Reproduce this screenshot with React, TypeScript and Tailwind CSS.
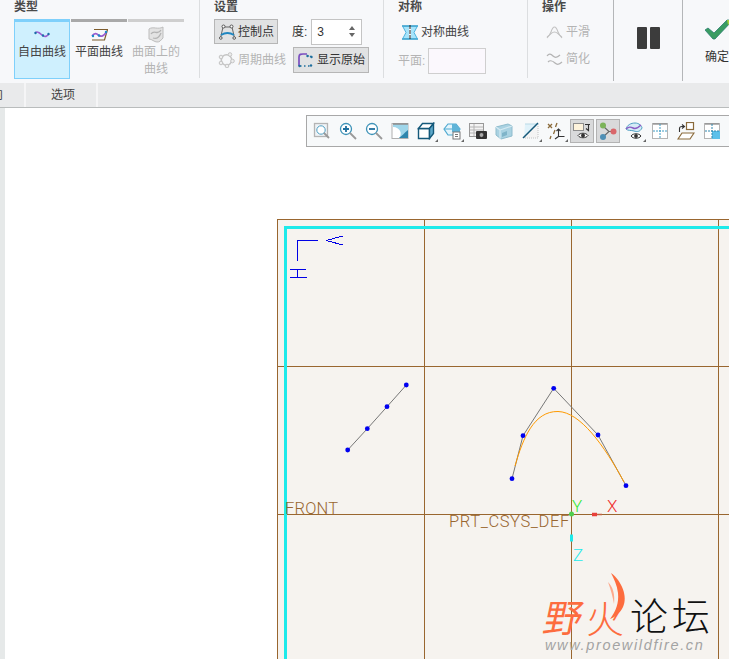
import React from "react";

const cjk = "font-['Liberation_Sans','Noto_Sans_CJK_SC',sans-serif]";

function Sep({ dark }: { dark?: boolean }) {
  return <div className={dark ? "w-px h-[81px] bg-[#b4b6b8] shrink-0" : "w-px h-[78px] bg-[#dcdee0] shrink-0"} />;
}

function Heading({ children }: { children: React.ReactNode }) {
  return <div className="text-xs font-bold text-[#4a4a4a] leading-[14px] h-[14px]">{children}</div>;
}

function TypeButton({ icon, label, state }: { icon: React.ReactNode; label: string; state: "on" | "off" | "dis" }) {
  const bar = state === "on" ? "bg-[#7fd0fb]" : state === "off" ? "bg-[#a9a9a9]" : "bg-[#cfcfcf]";
  const body = state === "on" ? "bg-[#cff0fe] border border-t-0 border-[#7fd0fb] text-[#444]" : state === "off" ? "text-[#444]" : "text-[#b4b4b4]";
  return (
    <div className="w-[56px] flex flex-col">
      <div className={`h-[3px] ${bar}`} />
      <div className={`h-[57px] flex flex-col items-center pt-[4px] ${body}`}>
        <div className="h-[16px] flex items-center justify-center">{icon}</div>
        <div className="text-xs leading-[17px] mt-[2px] text-center w-[50px]">{label}</div>
      </div>
    </div>
  );
}

const FreeIcon = (
  <svg width="16" height="8" viewBox="0 0 16 8" fill="none">
    <path d="M1 3C3 1 5 2 8 5s5 1 7-1" stroke="#9a5cd0" strokeWidth="1.600" />
    <circle cx="1.500" cy="3" r="1.200" fill="#1a6fa8" /><circle cx="9" cy="5.500" r="1.200" fill="#1a6fa8" /><circle cx="14.500" cy="4" r="1.200" fill="#1a6fa8" />
  </svg>
);
const PlaneIcon = (
  <svg width="17" height="13" viewBox="0 0 17 13" fill="none">
    <path d="M3 1.500h13.500l-3 10.500H1" stroke="#7d5c2e" strokeWidth="1.200" />
    <path d="M1 8C4 4 6 6 8 7.500s5 .5 7.500-3.500" stroke="#9a5cd0" strokeWidth="1.800" />
    <circle cx="2" cy="8" r="1.200" fill="#1a8ac8" /><circle cx="8" cy="7.500" r="1.200" fill="#1a8ac8" /><circle cx="15" cy="4" r="1.200" fill="#1a8ac8" />
  </svg>
);
const SurfIcon = (
  <svg width="16" height="17" viewBox="0 0 16 17" fill="none">
    <path d="M1 3C5 0 10 4 15 1v11c-3 3-3 4-6 4-3 0-5-3-8-3z" fill="#e3e3e3" stroke="#bdbdbd" />
    <path d="M3 8c3-5 7 2 10-4M5 12c3 1 6 0 8-5" stroke="#b4b4b4" strokeWidth="1.300" />
  </svg>
);
const CtrlIcon = (
  <svg width="17" height="16" viewBox="0 0 17 16" fill="none">
    <path d="M1.500 14L4 3h9l2.500 11" stroke="#666" />
    <path d="M2 11c4-2.500 9-2.500 13 0" stroke="#1f86c0" strokeWidth="1.800" />
    <circle cx="4.500" cy="2.500" r="1.500" fill="#fff" stroke="#555" /><circle cx="12.500" cy="2.500" r="1.500" fill="#fff" stroke="#555" />
    <circle cx="1.800" cy="14" r="1.300" fill="#fff" stroke="#555" /><circle cx="15.200" cy="14" r="1.300" fill="#fff" stroke="#555" />
  </svg>
);
const PeriodIcon = (
  <svg width="17" height="16" viewBox="0 0 17 16" fill="none" stroke="#c4c4c4">
    <circle cx="8.500" cy="8" r="5.200" strokeWidth="1.500" />
    <circle cx="3" cy="5" r="1.800" fill="#eee" /><circle cx="12" cy="2.500" r="1.800" fill="#eee" />
    <circle cx="14.500" cy="9" r="1.800" fill="#eee" /><circle cx="9" cy="14" r="1.800" fill="#eee" /><circle cx="3" cy="11" r="1.800" fill="#eee" />
  </svg>
);
const OrigIcon = (
  <svg width="16" height="15" viewBox="0 0 16 15" fill="none">
    <path d="M2 13V4C2 1 4 1 6 1h4" stroke="#7b4fc0" strokeWidth="1.700" />
    <path d="M10 2.500c2 1 3 1 4.500 1" stroke="#1f6f9e" strokeDasharray="1.500 1.500" strokeWidth="1.300" />
    <path d="M3 13h11" stroke="#1f6f9e" strokeDasharray="1.500 2.500" strokeWidth="1.700" />
    <circle cx="10.500" cy="3" r="1.200" fill="#1f6f9e" /><circle cx="14.500" cy="4" r="1.200" fill="#1f6f9e" /><circle cx="14" cy="12.500" r="1.200" fill="#1f6f9e" /><circle cx="2.500" cy="13" r="1.200" fill="#1f6f9e" />
  </svg>
);
const MirrorIcon = (
  <svg width="16" height="15" viewBox="0 0 16 15" fill="none">
    <path d="M0.500 1H7v13H0.500L4 7.500z" fill="#a6e4fb" />
    <path d="M15.500 1H9v13h6.500L12 7.500z" fill="#a6e4fb" />
    <path d="M0 1h16M0 14h16" stroke="#2f9ccc" strokeWidth="1.300" />
    <path d="M0.500 1L4 7.500 0.500 14M15.500 1L12 7.500l3.500 6.500" stroke="#4fb3de" />
    <path d="M8 0v15" stroke="#222" strokeDasharray="4 1" />
  </svg>
);
const SmoothIcon = (
  <svg width="17" height="13" viewBox="0 0 17 13" fill="none" stroke="#c2c2c2" strokeWidth="1.100">
    <path d="M1 11c2-1 3-2 4-5s2-5 3.500-5S11 3 12 6s2 4 4 5" />
    <path d="M1 12c3-4 5-6 7.500-6S13 8 16 12" />
  </svg>
);
const SimpleIcon = (
  <svg width="17" height="13" viewBox="0 0 17 13" fill="none" stroke="#b4b4b4" strokeWidth="1.200">
    <path d="M1 3c2-3 4-2 6 0s4 2 7-1" />
    <path d="M2 9c2-2 5-1 7 1s4 2 7-1" />
  </svg>
);

function Ribbon() {
  return (
    <div className="h-[83px] bg-[#f7f8fa] flex items-start overflow-hidden shrink-0 text-xs">
      <div className="w-[199px] pl-[14px] shrink-0">
        <Heading>类型</Heading>
        <div className="flex gap-px mt-[5px]">
          <TypeButton state="on" label="自由曲线" icon={FreeIcon} />
          <TypeButton state="off" label="平面曲线" icon={PlaneIcon} />
          <TypeButton state="dis" label="曲面上的曲线" icon={SurfIcon} />
        </div>
      </div>
      <Sep />
      <div className="w-[183px] pl-[14px] shrink-0">
        <Heading>设置</Heading>
        <div className="flex items-center mt-[5px] h-[25px]">
          <div className="w-[64px] h-[25px] bg-[#e1e2e3] border border-[#b6b6b6] flex items-center gap-[2px] pl-[4px] text-[#333]">
            {CtrlIcon}<span>控制点</span>
          </div>
          <span className="ml-[14px] text-[#333]">度:</span>
          <div className="ml-[4px] w-[51px] h-[26px] bg-white border border-[#c4c4c4] flex items-center justify-between px-[5px] text-[#333]">
            <span>3</span>
            <div className="flex flex-col gap-[3px] pr-[1px]">
              <div className="w-0 h-0 border-x-[3px] border-x-transparent border-b-[4px] border-b-[#666]" />
              <div className="w-0 h-0 border-x-[3px] border-x-transparent border-t-[4px] border-t-[#666]" />
            </div>
          </div>
        </div>
        <div className="flex items-center mt-[3px] h-[26px]">
          <div className="w-[79px] flex items-center gap-[3px] pl-[4px] text-[#b4b4b4] whitespace-nowrap">
            {PeriodIcon}<span>周期曲线</span>
          </div>
          <div className="w-[76px] h-[26px] bg-[#e1e2e3] border border-[#b6b6b6] flex items-center gap-[4px] pl-[3px] text-[#333] whitespace-nowrap">
            {OrigIcon}<span>显示原始</span>
          </div>
        </div>
      </div>
      <Sep />
      <div className="w-[143px] pl-[14px] shrink-0">
        <Heading>对称</Heading>
        <div className="flex items-center gap-[3px] mt-[9px] pl-[4px] h-[18px] text-[#444]">
          {MirrorIcon}<span>对称曲线</span>
        </div>
        <div className="flex items-center mt-[7px] h-[26px] text-[#b4b4b4]">
          <span>平面:</span>
          <div className="ml-[3px] w-[58px] h-[26px] bg-[#fbf8fd] border border-[#cfcfcf]" />
        </div>
      </div>
      <Sep />
      <div className="w-[85px] pl-[14px] shrink-0">
        <Heading>操作</Heading>
        <div className="flex items-center gap-[3px] mt-[10px] pl-[4px] h-[16px] text-[#b4b4b4]">{SmoothIcon}<span>平滑</span></div>
        <div className="flex items-center gap-[3px] mt-[11px] pl-[4px] h-[16px] text-[#b4b4b4]">{SimpleIcon}<span>简化</span></div>
      </div>
      <Sep dark />
      <div className="w-[68px] h-[81px] flex items-start justify-center gap-[3px] pt-[27px] shrink-0">
        <div className="w-[10px] h-[22px] bg-[#3c3c3c] rounded-[1px]" />
        <div className="w-[10px] h-[22px] bg-[#3c3c3c] rounded-[1px]" />
      </div>
      <Sep dark />
      <div className="pl-[22px] flex flex-col shrink-0 w-[46px]">
        <svg width="28" height="22" viewBox="0 0 28 22" className="mt-[19px] shrink-0">
          <path d="M0 11l3-2 6 5L22 1h6L10 20H8z" fill="#3a9c62" stroke="#2b7d70" strokeWidth="0.800" />
          <path d="M22 1h6l-5 5z" fill="#a8cf3a" />
        </svg>
        <span className="mt-[8px] text-[#333] whitespace-nowrap">确定</span>
      </div>
    </div>
  );
}

function Tabs() {
  return (
    <div className="h-[25px] bg-[#e9eaeb] border-b border-[#b9bcbc] flex shrink-0 text-xs text-[#444]">
      <div className="w-[26px] border-r-2 border-[#f5f5f6] overflow-hidden leading-[25px]">
        <span className="-ml-[9px] block">向</span>
      </div>
      <div className="w-[72px] border-r-2 border-[#f5f5f6] pl-[25px] leading-[25px]">选项</div>
    </div>
  );
}

const I = ({ children, caret, active }: { children: React.ReactNode; caret?: boolean; active?: boolean }) => (
  <div className={`relative w-[24px] h-[24px] mr-[2px] flex items-center justify-center shrink-0 ${active ? "bg-[#d9dadb] border border-[#b3b3b3]" : ""}`}>
    <svg width="18" height="18" viewBox="0 0 18 18" fill="none">{children}</svg>
    {caret && <div className="absolute right-0 bottom-[1px] w-0 h-0 border-l-[3px] border-l-transparent border-b-[3px] border-b-[#666]" />}
  </div>
);

function Toolbar() {
  return (
    <div className="absolute left-[301px] top-[7px] w-[440px] h-[32px] bg-[#f7f9fa] border border-[#a8a8a8] flex items-center pl-[3px]">
      <I><rect x="1.500" y="1.500" width="13" height="13" fill="#eef3f6" stroke="#b4b4b4" strokeWidth="1.300" /><circle cx="8" cy="8" r="4.200" fill="#fff" stroke="#4f9fc2" /><path d="M11 11l5 5" stroke="#999" strokeWidth="1.800" /></I>
      <I><circle cx="7" cy="7" r="5.500" fill="#fff" stroke="#3f93b8" strokeWidth="1.300" /><path d="M4 7h6M7 4v6" stroke="#1f6f9e" strokeWidth="1.800" /><path d="M11 11l6 6" stroke="#999" strokeWidth="1.800" /></I>
      <I><circle cx="7" cy="7" r="5.500" fill="#fff" stroke="#3f93b8" strokeWidth="1.300" /><path d="M4 7h6" stroke="#1f6f9e" strokeWidth="1.800" /><path d="M11 11l6 6" stroke="#999" strokeWidth="1.800" /></I>
      <I><rect x="1" y="1.500" width="16" height="15" fill="#fff" stroke="#b0b0b0" /><path d="M2 2h15v14H8C12 12 9 5 2 5z" fill="#9fd6ea" /><path d="M8 16c3-2 5-5 9-8v8z" fill="#2f86ad" /><path d="M2 2h15" stroke="#8d8d8d" strokeWidth="1.500" /></I>
      <I caret><path d="M1.500 6.500h11v10h-11z" fill="#fff" stroke="#14597a" strokeWidth="1.400" /><path d="M1.500 6.500l4-5h11l-4 5z" fill="#fff" stroke="#14597a" strokeWidth="1.400" /><path d="M12.500 6.500l4-5v10l-4 5z" fill="#5da9cb" stroke="#14597a" strokeWidth="1.400" /></I>
      <I caret><path d="M1 7l4-5h8l4 5-4 6H5z" fill="#e4f5fc" stroke="#4fa9d0" strokeWidth="1.200" /><path d="M9 2l4 0 4 5v3H9z" fill="#5fb4d8" /><path d="M1 7h8" stroke="#4fa9d0" /><rect x="10" y="10" width="7" height="7" fill="#fff" stroke="#777" /><path d="M12 12.500h3M12 14.500h3" stroke="#777" /></I>
      <I><rect x="0.500" y="1.500" width="14" height="13" fill="#f4f4f4" stroke="#999" /><path d="M1 5h13M1 8h13M1 11h13M5 2v12" stroke="#b4b4b4" /><rect x="7" y="9" width="11" height="8" rx="1" fill="#333" /><circle cx="12.500" cy="13" r="2.400" fill="#aaa" stroke="#111" strokeWidth="0.600" /></I>
      <I><path d="M1 5l12-3 4 2v10l-11 3-5-4z" fill="#a9d2e2" stroke="#8fbccd" /><path d="M5 8l12-4M5 8v9M5 8L1 5" stroke="#d5eaf2" strokeWidth="1.200" /><path d="M7 11l5-2v4l-5 2z" fill="#7fb4c9" /></I>
      <I caret><path d="M4 2h13v14H3z" fill="#e0f2fa" /><path d="M17 2v14H3z" fill="#f4f4f4" stroke="#c4c4c4" strokeDasharray="1 1" /><path d="M4 2h13" stroke="#b9d9e6" /><path d="M2 16L17 1" stroke="#14597a" strokeWidth="1.500" /></I>
      <I caret><path d="M1 2l4 4M5 2L1 6" stroke="#8a6a3a" strokeWidth="1.300" /><path d="M10 1l-1.500 4M8 8L6.500 12M4 14l-1 3" stroke="#8a6a3a" strokeWidth="1.300" /><path d="M11.500 7v7.500h6M9.500 9l2-2 2 2M11.500 14.500L8 17" stroke="#333" strokeWidth="1.100" /></I>
      <I active><rect x="0.500" y="1.500" width="10" height="7" fill="#fdf3dc" stroke="#8d8d8d" /><path d="M12 2.500h5M15.500 3v5.500l-2.500-2" stroke="#333" strokeWidth="1.100" /><path d="M5 13.500c2-3 8-3 10 0-2 3-8 3-10 0z" fill="#fff" stroke="#333" /><circle cx="10" cy="13.500" r="2" fill="#333" /></I>
      <I active><path d="M4 4l6 5.500-6 5.500M10 9.500h5" stroke="#666" strokeWidth="1.100" /><circle cx="4" cy="3.500" r="3" fill="#7cb45a" /><circle cx="14.500" cy="9.500" r="3" fill="#d9666a" /><circle cx="4" cy="15" r="3" fill="#4f8fb5" /></I>
      <I caret><path d="M1 7c1-4 5-6 9-6s7 3 7 5c-2 4-5 4-8 3s-6 0-8-2z" fill="#d5ecf7" stroke="#4f9fc2" /><path d="M1 7c3-3 5-2 7-1s5 0 8-3" stroke="#8b5cc4" strokeWidth="1.400" /><path d="M6 14c2-3 8-3 10 0-2 3-8 3-10 0z" fill="#fff" stroke="#333" /><circle cx="11" cy="14" r="1.900" fill="#333" /></I>
      <I><rect x="1.500" y="1.500" width="15" height="15" fill="#fff" stroke="#b4b4b4" /><path d="M2 2h14" stroke="#8d8d8d" strokeWidth="1.300" /><path d="M9 2v14M2 9h14" stroke="#3f9cc4" strokeDasharray="2 1" /></I>
      <I><rect x="9.500" y="0.500" width="7" height="7" fill="#fff" stroke="#8a6a3a" strokeWidth="1.200" /><path d="M5 11h12l-4 6H1z" fill="#fff" stroke="#8a6a3a" strokeWidth="1.200" /><path d="M2.500 10V6.500c0-1.500 1-2 2.500-2h2M5 2.500l2.500 2L5 6.500" stroke="#333" strokeWidth="1.100" /></I>
      <I><rect x="1.500" y="1.500" width="15" height="15" fill="#fff" stroke="#b4b4b4" /><path d="M2 2h14" stroke="#8d8d8d" strokeWidth="1.300" /><rect x="9" y="9" width="8" height="8" fill="#5cc0ea" /><path d="M9 2v14M2 9h14" stroke="#2f86ad" strokeDasharray="2 1" /></I>
    </div>
  );
}

function Drawing() {
  const ox = 5, oy = 108;
  const B = "#99662f";
  const left = [[347.7, 450], [367.3, 428.7], [387, 406.7], [406.3, 385]];
  const right = [[512, 478.7], [523, 435.7], [553.7, 388.3], [598, 435], [626, 485.7]];
  return (
    <svg className="absolute left-0 top-0" width="724" height="551" viewBox={`${ox} ${oy} 724 551`} fill="none" shapeRendering="crispEdges">
      <rect x="277.500" y="219.500" width="460" height="450" fill="#f6f3ef" stroke={B} />
      <path d="M424.500 220V660M571.500 220V660M718.500 220V660M278 366.500H729M278 514.500H729" stroke={B} />
      <path d="M285 227.500H729M285.500 226V660" stroke="#1eeaea" strokeWidth="3" />
      <path d="M297.500 261V240.500H318M326 240.500L343 236M326 240.500L343 245M290 269.500H306M290 277.500H307M297.500 270V277" stroke="#0000e6" />
      <g shapeRendering="auto">
        <polyline points={left.map((p) => p.join(",")).join(" ")} stroke="#777" />
        <polyline points={right.map((p) => p.join(",")).join(" ")} stroke="#777" />
        <path d="M515 466C523 438 534 411 558 411.500C580 412 604 445 624 482" stroke="#ff9a00" strokeWidth="1" />
        {[...left, ...right].map(([x, y], i) => <circle key={i} cx={x} cy={y} r="2.400" fill="#0000f0" />)}
        <circle cx="571.500" cy="514" r="2.500" fill="#4fd04f" />
        <path d="M592 514.500h5" stroke="#e8403a" strokeWidth="3.500" />
        <path d="M597 514.500h5" stroke="#c06040" strokeWidth="1.500" />
        <path d="M571.500 534.500v7" stroke="#1eeaea" strokeWidth="3" />
      </g>
    </svg>
  );
}

const Label = ({ x, y, c, size, track, children }: { x: number; y: number; c: string; size: number; track?: number; children: React.ReactNode }) => (
  <div className="absolute leading-none font-['Roboto',sans-serif] font-light whitespace-nowrap" style={{ left: x - 5, top: y - 108, color: c, fontSize: size, letterSpacing: track }}>{children}</div>
);

function Watermark() {
  const logo = "absolute font-['Noto_Sans_CJK_SC',sans-serif] leading-none whitespace-nowrap";
  return (
    <>
      <div className={`${logo} left-[540px] top-[489px] text-[38px] text-[#fd6c3e] -skew-x-12`}>野</div>
      <div className={`${logo} left-[581px] top-[490px] text-[38px] font-light text-[#fd6c3e]`}>火</div>
      <svg className="absolute left-[603px] top-[465px]" width="20" height="48" viewBox="0 0 20 48">
        <path d="M3 0C14 8 20 24 15 34 12 40 7 44 2 46 8 38 11 30 10 20 9 12 6 6 3 0z" fill="#fd6c3e" />
        <path d="M0 9c5 5 7 12 6 22-1-6-3-14-6-22z" fill="#fda98c" />
      </svg>
      <div className={`${logo} left-[625px] top-[487px] text-[38px] font-light text-[#111]`}>论</div>
      <div className={`${logo} left-[667px] top-[487px] text-[38px] font-light text-[#111]`}>坛</div>
      <div className="absolute left-[540px] top-[530px] text-[14.500px] italic tracking-[1.650px] text-[#a3a3a3] font-['Liberation_Sans',sans-serif] leading-none whitespace-nowrap">www.proewildfire.cn</div>
    </>
  );
}

export default function App() {
  return (
    <div className={`w-[729px] h-[659px] overflow-hidden flex flex-col bg-white ${cjk}`}>
      <Ribbon />
      <Tabs />
      <div className="relative flex-1 flex overflow-hidden">
        <div className="w-[5px] bg-[#e6e9e9] shrink-0" />
        <div className="relative flex-1">
          <Drawing />
          <Label x={285} y={501} c="#99662f" size={16.5} track={0.2}>FRONT</Label>
          <Label x={449} y={514} c="#99662f" size={16.5} track={0.6}>PRT_CSYS_DEF</Label>
          <Label x={572} y={498} c="#35e835" size={17}>Y</Label>
          <Label x={607} y={498} c="#f02c2c" size={17}>X</Label>
          <Label x={573} y={547} c="#1eeaea" size={17}>Z</Label>
          <Watermark />
          <Toolbar />
        </div>
      </div>
    </div>
  );
}
